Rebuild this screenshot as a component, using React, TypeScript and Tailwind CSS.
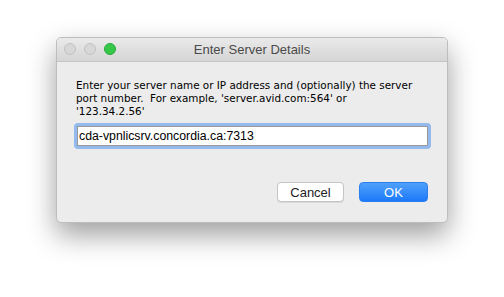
import React from "react";

const font = { fontFamily: '"Liberation Sans", Arial, sans-serif' };
const bodyFont = { fontFamily: '"DejaVu Sans", "Liberation Sans", sans-serif' };

const App: React.FC = () => {
  return (
    <div className="w-[504px] h-[297px] bg-white pt-[37px] pl-[56px]" style={font}>
      <div className="w-[392px] h-[186px] flex flex-col rounded-[5px] border border-[#bdbdbd] bg-[#ececec] shadow-[0_12px_28px_rgba(0,0,0,0.38)] overflow-hidden">
        {/* title bar */}
        <div className="relative h-[24px] shrink-0 flex items-center justify-center border-b border-[#c6c6c6] bg-gradient-to-b from-[#eaeaea] to-[#d5d5d5]">
          <div className="absolute left-[7px] top-[5px] flex gap-[8px]">
            <span className="w-[12px] h-[12px] rounded-full bg-[#d7d7d7] border border-[#c2c2c2]" />
            <span className="w-[12px] h-[12px] rounded-full bg-[#d7d7d7] border border-[#c2c2c2]" />
            <span className="w-[12px] h-[12px] rounded-full bg-[#35c748] border border-[#2aaa3b]" />
          </div>
          <span className="text-[13px] text-[#4a4a4a]">Enter Server Details</span>
        </div>

        {/* content */}
        <div className="flex flex-col pl-[17px] pt-[17px]">
          <p className="ml-[2px] text-[10.4px] leading-[13px] text-black whitespace-nowrap" style={bodyFont}>
            Enter your server name or IP address and (optionally) the server
            <br />
            port number.&nbsp; For example, 'server.avid.com:564' or
            <br />
            '123.34.2.56'
          </p>
          <div className="mt-[5px] w-[357px] h-[26px] rounded-[4px] bg-[#94b9ee] p-[3px]">
            <div className="h-full bg-white border border-[#9a9a9a] flex items-center px-[1px] text-[12.3px] text-black">
              cda-vpnlicsrv.concordia.ca:7313
            </div>
          </div>
          <div className="mt-[33px] flex justify-end gap-[15px] pr-[19px]">
            <button className="w-[67px] h-[20px] rounded-[4px] bg-white border border-[#c4c4c4] shadow-[0_1px_0_rgba(0,0,0,0.08)] text-[13px] text-[#222]">
              Cancel
            </button>
            <button className="w-[69px] h-[20px] rounded-[4px] bg-gradient-to-b from-[#4fa0fb] to-[#1a7af9] border border-[#2d7ef0] text-[13px] text-white">
              OK
            </button>
          </div>
        </div>
      </div>
    </div>
  );
};

export default App;
